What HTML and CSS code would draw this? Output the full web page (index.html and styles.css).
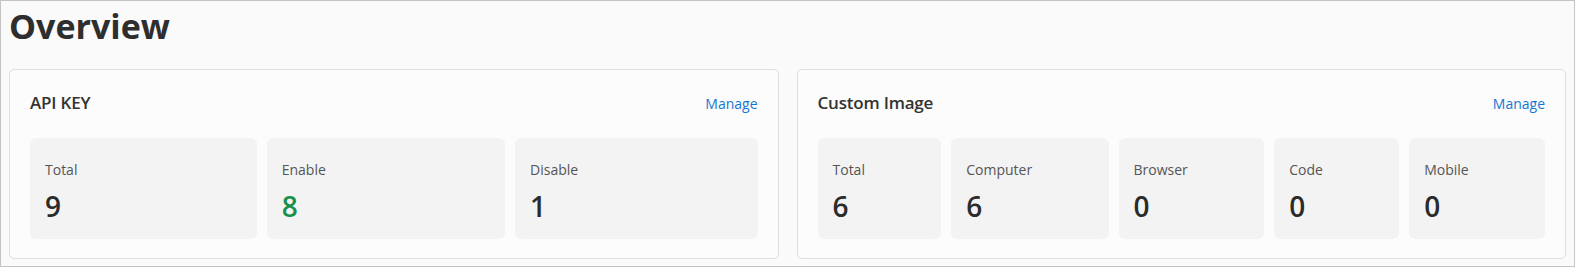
FILE: index.html
```html
<!DOCTYPE html>
<html lang="en">
<head>
  <meta charset="UTF-8">
  <meta name="viewport" content="width=device-width, initial-scale=1.0">
  <title>Overview</title>
  <link rel="stylesheet" href="styles.css">
</head>
<body>
  <div class="page">
    <h1 class="title">Overview</h1>
    <div class="cards">
      <div class="card">
        <div class="card-head">
          <span class="card-title">API KEY</span>
          <a class="manage" href="#">Manage</a>
        </div>
        <div class="stats">
          <div class="stat"><p class="label">Total</p><p class="value">9</p></div>
          <div class="stat"><p class="label">Enable</p><p class="value green">8</p></div>
          <div class="stat"><p class="label">Disable</p><p class="value">1</p></div>
        </div>
      </div>
      <div class="card">
        <div class="card-head">
          <span class="card-title">Custom Image</span>
          <a class="manage" href="#">Manage</a>
        </div>
        <div class="stats">
          <div class="stat"><p class="label">Total</p><p class="value">6</p></div>
          <div class="stat"><p class="label">Computer</p><p class="value">6</p></div>
          <div class="stat"><p class="label">Browser</p><p class="value">0</p></div>
          <div class="stat"><p class="label">Code</p><p class="value">0</p></div>
          <div class="stat"><p class="label">Mobile</p><p class="value">0</p></div>
        </div>
      </div>
    </div>
  </div>
</body>
</html>
```

FILE: styles.css
```css
html, body {
  margin: 0;
  padding: 0;
}
body {
  font-family: "Open Sans", "Noto Sans", sans-serif;
  color: #333;
  background: #fafafa;
}
.page {
  box-sizing: border-box;
  height: 267px;
  border: 1px solid #c4c4c4;
  padding: 5px 8px 0 8px;
  background: #fafafa;
}
.title {
  margin: 0;
  font-size: 34px;
  line-height: 41px;
  font-weight: 700;
  color: #2e2e2e;
}
.cards {
  display: flex;
  gap: 18px;
  margin-top: 22px;
}
.card {
  flex: 1;
  border: 1px solid #dedede;
  border-radius: 5px;
  background: #fcfcfc;
  padding: 21px 20px 19px 20px;
}
.card-head {
  display: flex;
  justify-content: space-between;
  align-items: center;
  height: 24px;
}
.card-title {
  font-size: 17px;
  line-height: 24px;
  font-weight: 600;
  color: #333;
  letter-spacing: -0.2px;
}
.manage {
  font-size: 14px;
  color: #1677d2;
  text-decoration: none;
}
.stats {
  display: flex;
  gap: 10px;
  margin-top: 23px;
}
.stat {
  flex-grow: 1;
  background: #f3f3f3;
  border-radius: 6px;
  padding: 22px 15px 15px 15px;
}
.label {
  margin: 0;
  font-size: 14px;
  line-height: 20px;
  color: #555;
}
.value {
  margin: 8px 0 0 0;
  font-size: 28px;
  line-height: 36px;
  font-weight: 600;
  color: #2b2b2b;
}
.green {
  color: #16904a;
}
```
